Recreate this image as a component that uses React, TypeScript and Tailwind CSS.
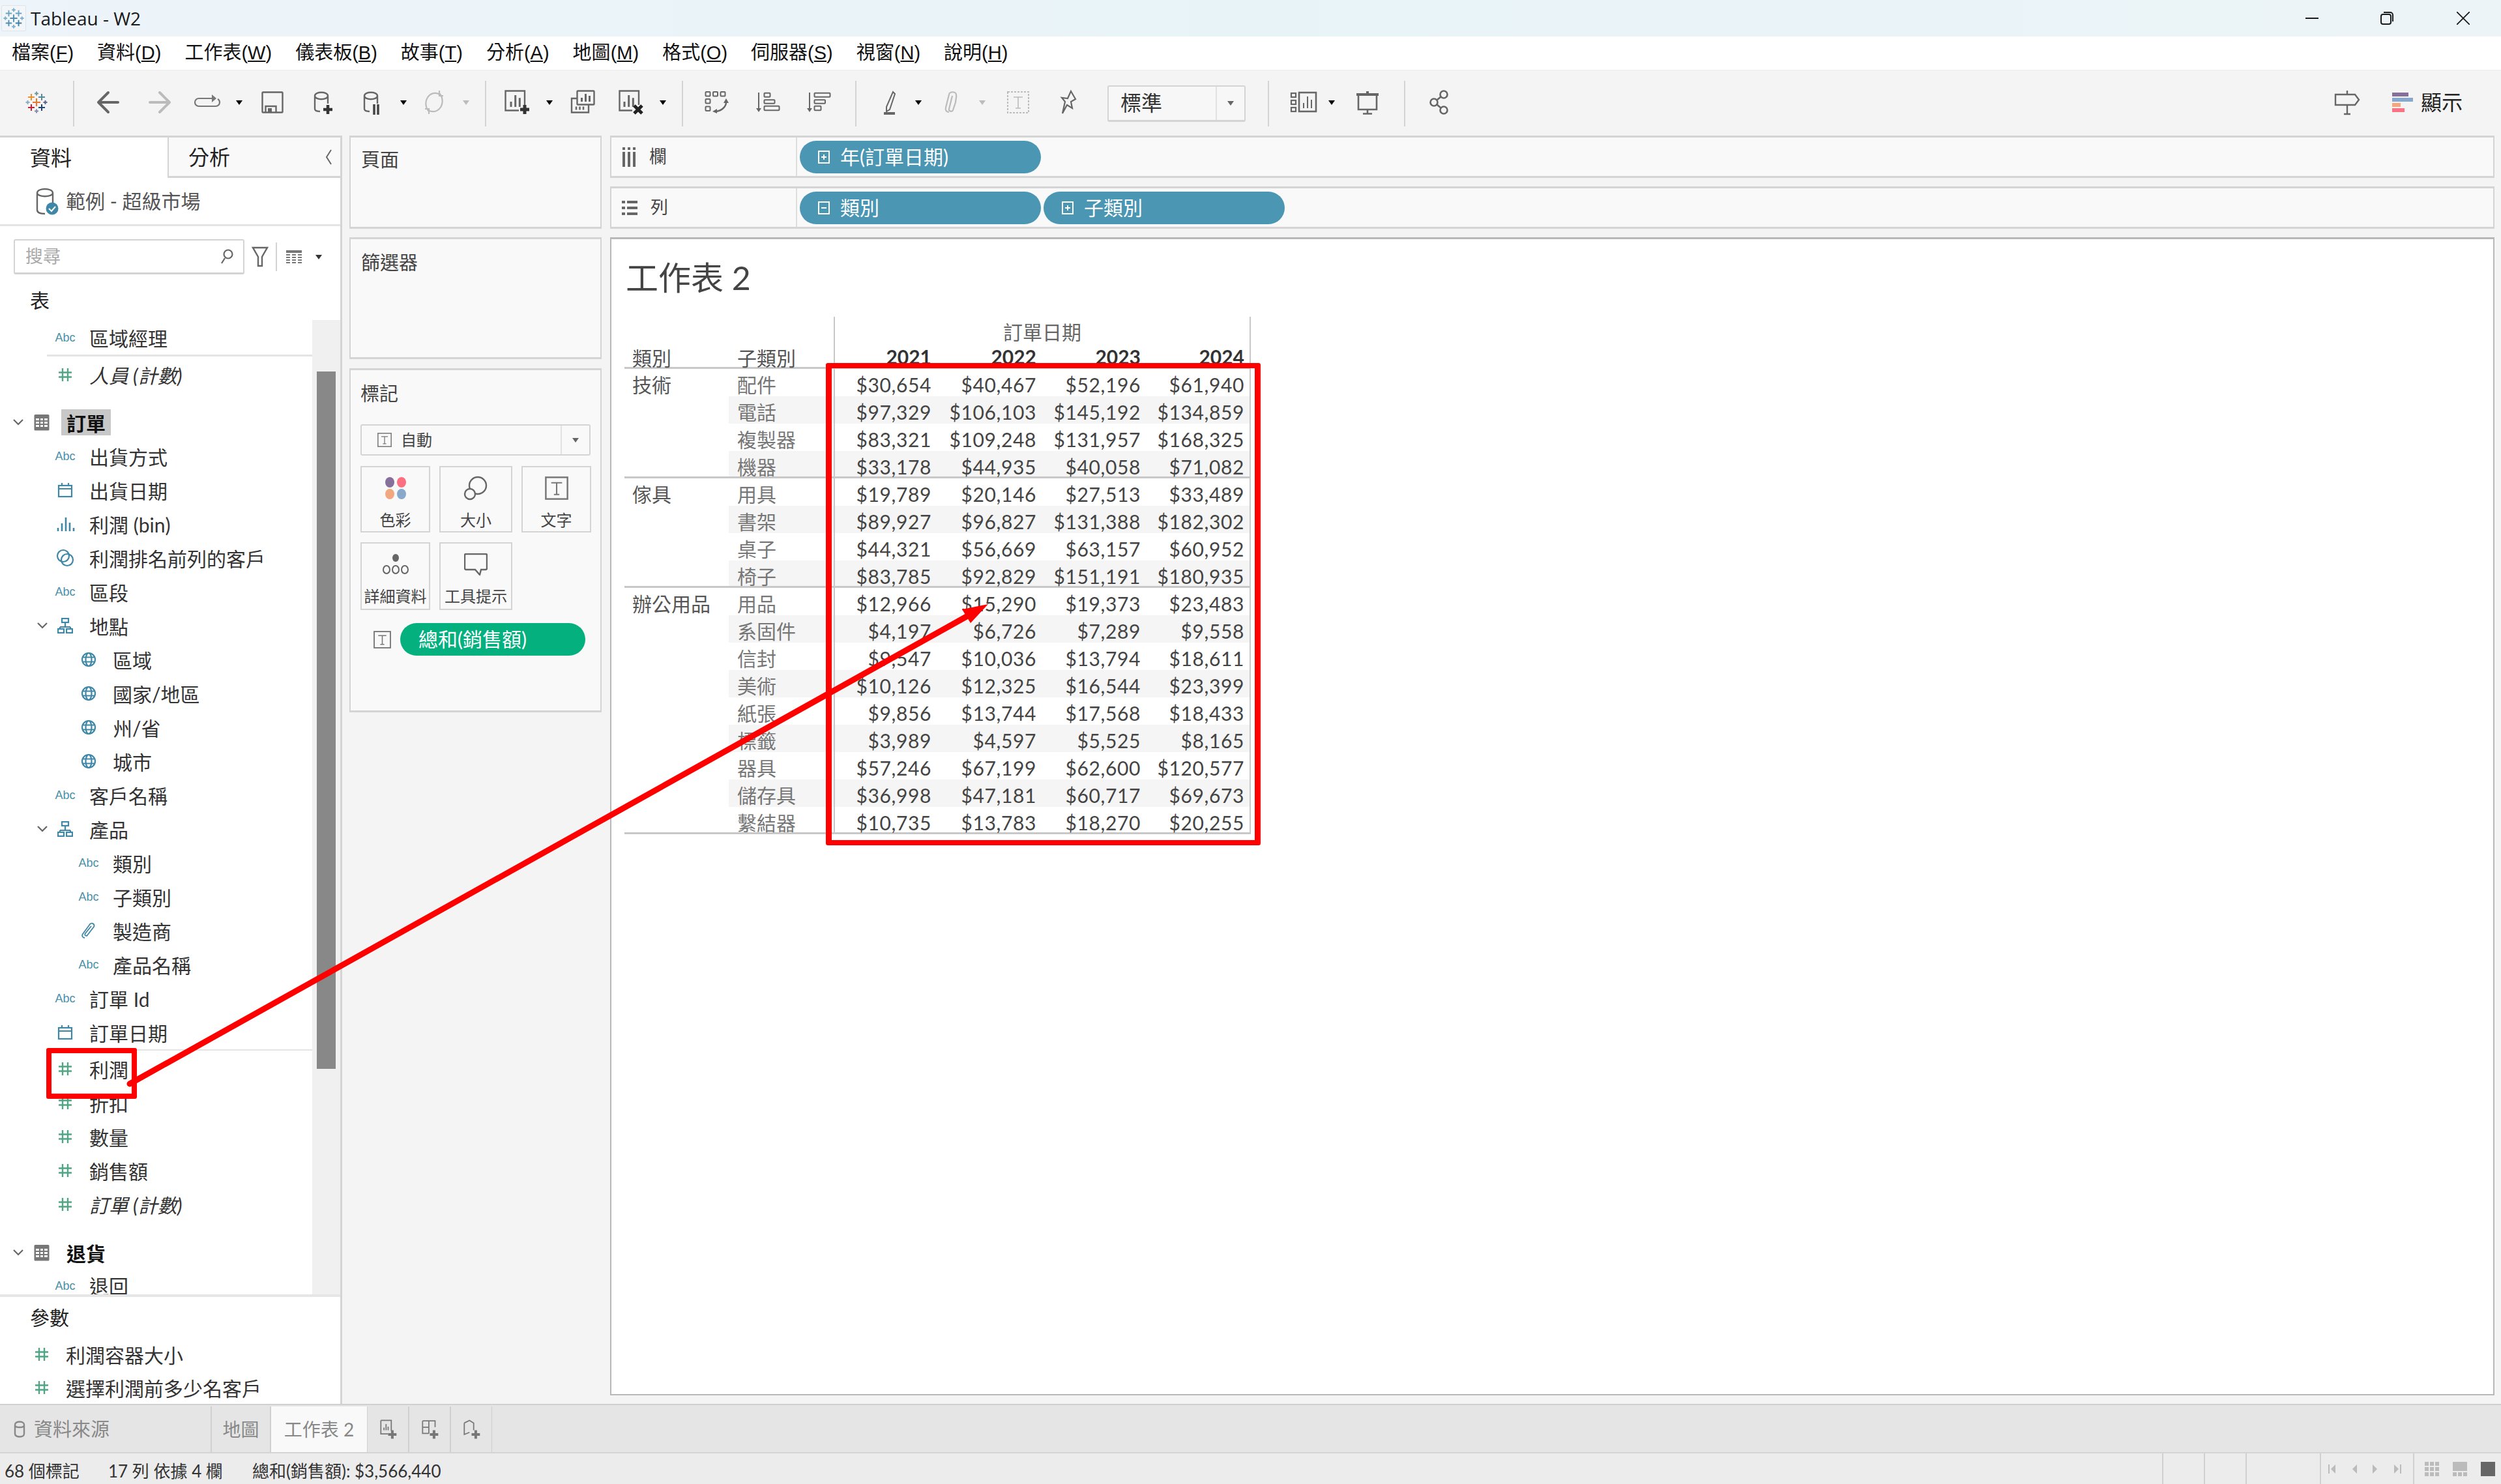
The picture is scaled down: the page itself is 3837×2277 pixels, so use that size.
import type { ReactNode } from "react"

type IconProps = { className?: string }

// base wrapper for the 44x44 toolbar drawings
function Ico({ children, className = "text-[#666]" }: { children: ReactNode; className?: string }) {
  return (
    <svg width={44} height={44} viewBox="0 0 44 44" fill="none" stroke="currentColor" strokeWidth={2.4} className={`shrink-0 ${className}`}>
      {children}
    </svg>
  )
}

function TableauLogo({ size = 36, muted = false }: { size?: number; muted?: boolean }) {
  const crosses: [number, number, number, string][] = [
    [22, 22, 6, muted ? "#4f8fb5" : "#e8762d"],
    [14, 14, 5, muted ? "#6aa3c4" : "#eb912b"],
    [30, 14, 5, muted ? "#6aa3c4" : "#59879b"],
    [14, 30, 5, muted ? "#4f8fb5" : "#c72035"],
    [30, 30, 5, muted ? "#3f7ea8" : "#1f447a"],
    [22, 8.500, 3, muted ? "#7fb0cc" : "#7099a6"],
    [22, 35.500, 3, muted ? "#7fb0cc" : "#7e8fb0"],
    [8.500, 22, 3, muted ? "#7fb0cc" : "#8ab0bd"],
    [35.500, 22, 3, muted ? "#7fb0cc" : "#5b6591"],
  ]
  return (
    <svg width={size} height={size} viewBox="4 4 36 36" strokeWidth={2} className="shrink-0">
      {crosses.map(([x, y, r, c], i) => (
        <g key={i} stroke={c}>
          <path d={`M${x - r} ${y}H${x + r}M${x} ${y - r}V${y + r}`} />
        </g>
      ))}
    </svg>
  )
}

function Caret({ className = "text-[#666]" }: IconProps) {
  return (
    <svg width={14} height={14} viewBox="0 0 14 14" className={`shrink-0 ${className}`} fill="currentColor">
      <path d="M2 4h10l-5 7z" />
    </svg>
  )
}

const Cyl = () => <path d="M12 12c0-7 20-7 20 0s-20 7-20 0zM12 12v20c0 3 4 4 8 4M32 12v12" />
const SheetBars = () => <path d="M14 29V21M20.700 29V11M27.300 29V15.300" strokeWidth={3} />

const tbIcons = {
  back: <path d="M37 22H8M22 7L7 22l15 15" strokeWidth={4} strokeLinecap="round" strokeLinejoin="round" />,
  swap: (
    <>
      <path d="M30 16H9a6 6 0 0 0 0 12h26a6 6 0 0 0 6-6c0-2-1-4-3-5" strokeWidth={2.2} />
      <path d="M29 10l7 6-7 6z" fill="currentColor" stroke="none" />
    </>
  ),
  save: (
    <>
      <rect x="6.500" y="6.500" width="31" height="31" rx="1" />
      <path d="M11.500 37V28h16v9" />
      <path d="M15 31h6v6h-6z" fill="currentColor" stroke="none" />
    </>
  ),
  newDs: (
    <>
      <Cyl />
      <path d="M32 26v14M25 33h14" strokeWidth={4.500} stroke="#333" />
    </>
  ),
  pauseDs: (
    <>
      <Cyl />
      <path d="M27 25v16M33 25v16" strokeWidth={3.500} stroke="#444" />
    </>
  ),
  refresh: <path d="M33 12A14 16 0 0 0 14 36M11 32A14 16 0 0 0 30 8M30 4v8h6M14 40v-8H8" strokeWidth={2.2} />,
  newSheet: (
    <>
      <path d="M35 26V4.500H5.500v30H26" />
      <SheetBars />
      <path d="M35 26v14M28 33h14" strokeWidth={5} stroke="#333" />
    </>
  ),
  dup: (
    <>
      <rect x="13.500" y="4.500" width="26" height="21" rx="1" />
      <path d="M20.500 21v-6M26.500 21V9M32.500 21v-9" strokeWidth={3} />
      <path d="M13 16H5v21.500h26V26" />
      <path d="M12 33.500v-5M17.500 33.500v-5M23 33.500v-5" strokeWidth={2.500} />
    </>
  ),
  clear: (
    <>
      <path d="M36 26V4.500H6.500v30H26" />
      <SheetBars />
      <path d="M29 27l12 12M41 27L29 39" strokeWidth={5} stroke="#222" />
    </>
  ),
  pivot: (
    <>
      <rect x="5.500" y="6" width="7" height="6.500" rx="1" strokeWidth={2} />
      <rect x="17" y="6" width="7" height="6.500" rx="1" strokeWidth={2} />
      <rect x="28.500" y="6" width="7" height="6.500" rx="1" strokeWidth={2} />
      <rect x="5.500" y="17" width="7" height="6.500" rx="1" strokeWidth={2} />
      <rect x="5.500" y="28.500" width="7" height="6.500" rx="1" strokeWidth={2} />
      <path d="M37 22c0 7-7 13-16 14" />
      <path d="M33 23l4-7 4 7zM23 32l-7 4 7 3z" fill="currentColor" stroke="none" />
    </>
  ),
  sortAsc: (
    <>
      <path d="M9 7v26" strokeWidth={2} />
      <path d="M5 31h8l-4 6z" fill="currentColor" stroke="none" />
      <rect x="17.500" y="7.700" width="9" height="6" rx="1" strokeWidth={2} />
      <rect x="17.500" y="18.300" width="16" height="5.400" rx="1" strokeWidth={2} />
      <rect x="17.500" y="27.700" width="23" height="6.600" rx="1" strokeWidth={2} />
    </>
  ),
  sortDesc: (
    <>
      <path d="M8 7v26" strokeWidth={2} />
      <path d="M4 31h8l-4 6z" fill="currentColor" stroke="none" />
      <rect x="15.500" y="7.700" width="24" height="6" rx="1" strokeWidth={2} />
      <rect x="15.500" y="18.300" width="16.500" height="5.400" rx="1" strokeWidth={2} />
      <rect x="15.500" y="27.700" width="10" height="6.600" rx="1" strokeWidth={2} />
    </>
  ),
  pen: (
    <>
      <path d="M26 6l3 3-8 24-5 3v-7z" strokeWidth={2} />
      <path d="M12 39h17" strokeWidth={4} />
    </>
  ),
  clip: <path d="M17 37c-4 0-6-3-5-7l5-20c1-5 10-5 11 0 1 4-1 8-1 12l-4 12c-1 3-7 2-6-2l5-20" strokeWidth={2.200} />,
  textBox: (
    <>
      <rect x="6" y="6" width="32" height="32" strokeDasharray="3 2" strokeWidth={2} />
      <path d="M15 14h14M22 14v17M18 31h8" strokeWidth={1.600} />
    </>
  ),
  pin: <path d="M26 5l7 12-7 4 2 10-8-5-7 13 4-18-5-6 9 1z" strokeWidth={2.200} />,
  fit: (
    <>
      <rect x="3" y="8" width="7" height="6" strokeWidth={2.200} />
      <rect x="3" y="19" width="7" height="6" strokeWidth={2.200} />
      <rect x="3" y="30" width="7" height="6" strokeWidth={2.200} />
      <rect x="15" y="7" width="26" height="29" strokeWidth={2.600} />
      <path d="M22 31V23M28 31V13M34 31V18" strokeWidth={2} />
    </>
  ),
  present: (
    <>
      <path d="M5 10h34M22 5v5" strokeWidth={4} />
      <path d="M8 10v23h28V10M22 33v7M15 39.500h14" strokeWidth={2.600} />
    </>
  ),
  share: (
    <>
      <circle cx="29" cy="10" r="5.500" strokeWidth={2.600} />
      <circle cx="14" cy="22" r="5.500" strokeWidth={2.600} />
      <circle cx="29" cy="34" r="5.500" strokeWidth={2.600} />
      <path d="M24.500 13.500l-6 5M18.500 25.500l6 5" strokeWidth={2.600} />
    </>
  ),
  sign: <path d="M4 10h30l6 8-6 8H4zM22 4v6M22 26v14M17 40h10" />,
}

function Sep({ className }: IconProps) {
  return <div className={`mt-[4px] h-[70px] w-[2px] shrink-0 bg-[#d4d4d4] ${className}`} />
}

function Bar({ className }: IconProps) {
  return <div className={className} />
}

function Toolbar() {
  return (
    <div className="flex h-[101px] items-center border-t-[2px] border-[#f0f0f0] bg-[#f4f4f4] pb-[4px] pr-[59px]">
      <div className="ml-[34px] flex w-[44px] justify-center"><TableauLogo /></div>
      <Sep className="ml-[34px]" />
      <div className="ml-[30px]"><Ico>{tbIcons.back}</Ico></div>
      <div className="ml-[35px] -scale-x-100"><Ico className="text-[#bbb]">{tbIcons.back}</Ico></div>
      <div className="ml-[29px]"><Ico className="text-[#777]">{tbIcons.swap}</Ico></div>
      <Caret className="ml-[20px]" />
      <div className="ml-[22px]"><Ico>{tbIcons.save}</Ico></div>
      <div className="ml-[31px]"><Ico>{tbIcons.newDs}</Ico></div>
      <div className="ml-[32px]"><Ico>{tbIcons.pauseDs}</Ico></div>
      <Caret className="ml-[21px]" />
      <div className="ml-[18px]"><Ico className="text-[#bbb]">{tbIcons.refresh}</Ico></div>
      <Caret className="ml-[20px] text-[#bbb]" />
      <Sep className="ml-[22px]" />
      <div className="ml-[24px]"><Ico>{tbIcons.newSheet}</Ico></div>
      <Caret className="ml-[22px]" />
      <div className="ml-[22px]"><Ico>{tbIcons.dup}</Ico></div>
      <div className="ml-[28px]"><Ico>{tbIcons.clear}</Ico></div>
      <Caret className="ml-[22px]" />
      <Sep className="ml-[22px]" />
      <div className="ml-[29px]"><Ico>{tbIcons.pivot}</Ico></div>
      <div className="ml-[34px]"><Ico>{tbIcons.sortAsc}</Ico></div>
      <div className="ml-[35px]"><Ico>{tbIcons.sortDesc}</Ico></div>
      <Sep className="ml-[34px]" />
      <div className="ml-[30px]"><Ico>{tbIcons.pen}</Ico></div>
      <Caret className="ml-[14px]" />
      <div className="ml-[23px]"><Ico className="text-[#bbb]">{tbIcons.clip}</Ico></div>
      <Caret className="ml-[17px] text-[#bbb]" />
      <div className="ml-[26px]"><Ico className="text-[#bbb]">{tbIcons.textBox}</Ico></div>
      <div className="ml-[33px]"><Ico>{tbIcons.pin}</Ico></div>
      <div className="ml-[38px] mt-[4px] flex h-[56px] w-[212px] items-center rounded-[3px] border-2 border-b-[3px] border-[#d4d4d4] bg-[#f7f7f7]">
        <span className="flex-1 pl-[18px] text-[32px] leading-none text-[#333]">標準</span>
        <div className="flex h-full w-[44px] items-center justify-center border-l-2 border-[#e2e2e2]">
          <Caret />
        </div>
      </div>
      <Sep className="ml-[34px]" />
      <div className="ml-[31px]"><Ico>{tbIcons.fit}</Ico></div>
      <Caret className="ml-[14px]" />
      <div className="ml-[26px]"><Ico>{tbIcons.present}</Ico></div>
      <Sep className="ml-[34px]" />
      <div className="ml-[30px]"><Ico>{tbIcons.share}</Ico></div>
      <div className="ml-auto"><Ico>{tbIcons.sign}</Ico></div>
      <div className="ml-[47px] flex w-[32px] flex-col gap-[2px]">
        <Bar className="h-[6px] w-[25px] bg-[#86709a]" />
        <Bar className="h-[6px] w-[32px] bg-[#88a8cc]" />
        <Bar className="h-[6px] w-[13px] bg-[#f3a77f]" />
        <Bar className="h-[6px] w-[19px] bg-[#fb7285]" />
      </div>
      <span className="ml-[12px] text-[32px] leading-none text-[#222]">顯示</span>
    </div>
  )
}

const menus: [string, string][] = [
  ["檔案", "F"], ["資料", "D"], ["工作表", "W"], ["儀表板", "B"], ["故事", "T"], ["分析", "A"],
  ["地圖", "M"], ["格式", "O"], ["伺服器", "S"], ["視窗", "N"], ["說明", "H"],
]

function TitleBar() {
  return (
    <div className="flex h-[56px] items-center bg-gradient-to-r from-[#edf4fa] via-[#e8f3f8] to-[#ecf4f7]">
      <div className="ml-[2px] flex h-[40px] w-[38px] items-center justify-center rounded-[2px] border border-[#dde5ea] bg-[#f3f6f9]"><TableauLogo size={34} muted /></div>
      <span className="ml-[7px] [font-family:'Open_Sans',sans-serif] text-[28px] leading-none text-[#1a1a1a]">Tableau - W2</span>
      <div className="ml-auto flex items-center text-[#1a1a1a]">
        <svg width="20" height="20" viewBox="0 0 20 20" stroke="currentColor" strokeWidth="2"><path d="M0 10h20" /></svg>
        <svg className="ml-[95px]" width="20" height="20" viewBox="0 0 20 20" fill="none" stroke="currentColor" strokeWidth="2">
          <rect x="1" y="4" width="15" height="15" rx="3" />
          <path d="M5 1h10a4 4 0 0 1 4 4v10" />
        </svg>
        <svg className="ml-[97px] mr-[48px]" width="20" height="20" viewBox="0 0 20 20" stroke="currentColor" strokeWidth="1.8"><path d="M0 0l20 20M20 0L0 20" /></svg>
      </div>
    </div>
  )
}

function MenuBar() {
  return (
    <div className="flex h-[51px] items-center gap-[36px] bg-white pl-[18px] [font-family:'Liberation_Sans','Noto_Sans_CJK_TC',sans-serif] text-[29px] text-[#111]">
      {menus.map(([label, key]) => (
        <span key={key} className="leading-none">
          {label}(<u>{key}</u>)
        </span>
      ))}
    </div>
  )
}

/* ---- data pane field icons ---- */

const Abc = () => <span className="[font-family:'Liberation_Sans',sans-serif] text-[18px] text-[#4a8fa8]">Abc</span>
const Hash = () => (
  <svg width="22" height="22" viewBox="0 0 22 22" stroke="#4fa584" strokeWidth="2.4">
    <path d="M7 1v20M15 1v20M1 7.500h20M1 14.500h20" />
  </svg>
)
const Calendar = () => (
  <svg width="24" height="24" viewBox="0 0 24 24" fill="none" stroke="#3f87a6" strokeWidth="2.2">
    <rect x="2" y="5" width="20" height="17" />
    <path d="M2 10h20M7 1v5M17 1v5" />
  </svg>
)
const BinIco = () => (
  <svg width="30" height="24" viewBox="0 0 30 24" stroke="#3f87a6" strokeWidth="2.6">
    <path d="M4 23v-5M10 23V11M16 23V2M22 23V10M28 23v-5" />
  </svg>
)
const SetIco = () => (
  <svg width="28" height="28" viewBox="0 0 28 28" fill="none" stroke="#3f87a6" strokeWidth="2.2">
    <circle cx="11" cy="11" r="9" />
    <circle cx="17" cy="17" r="9" />
  </svg>
)
const HierIco = () => (
  <svg width="24" height="24" viewBox="0 0 24 24" fill="none" stroke="#3f87a6" strokeWidth="2.2">
    <rect x="7" y="1" width="10" height="6" />
    <path d="M12 7v7M4 14h16M4 14v3M20 14v3" />
    <rect x="1" y="17" width="9" height="6" />
    <rect x="14" y="17" width="9" height="6" />
  </svg>
)
const GlobeIco = () => (
  <svg width="24" height="24" viewBox="0 0 24 24" fill="none" stroke="#3f87a6" strokeWidth="2.2">
    <circle cx="12" cy="12" r="10" />
    <ellipse cx="12" cy="12" rx="4.500" ry="10" />
    <path d="M2 8.500h20M2 15.500h20" />
  </svg>
)
const ClipIco = () => (
  <svg width="24" height="26" viewBox="0 0 24 26" fill="none" stroke="#3f87a6" strokeWidth="1.8">
    <path d="M6 24c-3 0-5-3-3-6L14 3c3-3 8 0 6 4L10 20c-2 2-5 0-3-3L16 6" />
  </svg>
)
const TableIco = () => (
  <svg width="24" height="26" viewBox="0 0 24 26" fill="#777" stroke="none">
    <path d="M2 1h20a1.500 1.500 0 0 1 1.500 1.500V24a1.500 1.500 0 0 1-1.500 1.500H2A1.500 1.500 0 0 1 .5 24V2.500A1.500 1.500 0 0 1 2 1zM3 7v3h5V7zm7 0v3h4V7zm6 0v3h5V7zM3 12v3h5v-3zm7 0v3h4v-3zm6 0v3h5v-3zM3 17v3h5v-3zm7 0v3h4v-3zm6 0v3h5v-3z" fillRule="evenodd" />
  </svg>
)
const Chevron = () => (
  <svg width="22" height="14" viewBox="0 0 22 14" fill="none" stroke="#666" strokeWidth="2.2">
    <path d="M4 3l7 7 7-7" />
  </svg>
)

function IconSlot({ children }: { children: ReactNode }) {
  return <div className="flex w-[40px] shrink-0 items-center justify-center">{children}</div>
}

function Field({ icon, label, nested, italic }: { icon: ReactNode; label: string; nested?: boolean; italic?: boolean }) {
  return (
    <div className={`flex h-[52px] items-center ${nested ? "pl-[116px]" : "pl-[80px]"}`}>
      <IconSlot>{icon}</IconSlot>
      <span className={`ml-[17px] whitespace-nowrap pt-[3px] ${italic ? "italic" : ""}`}>{label}</span>
    </div>
  )
}

function Folder({ icon, label }: { icon: ReactNode; label: string }) {
  return (
    <div className="flex h-[52px] items-center pl-[54px]">
      <Chevron />
      <div className="ml-[4px]"><IconSlot>{icon}</IconSlot></div>
      <span className="ml-[17px] whitespace-nowrap pt-[3px]">{label}</span>
    </div>
  )
}

function TableHead({ label, active }: { label: string; active?: boolean }) {
  return (
    <div className="flex h-[52px] items-center pl-[17px]">
      <Chevron />
      <div className="ml-[5px]"><IconSlot><TableIco /></IconSlot></div>
      <span className={`ml-[10px] flex h-[40px] items-center px-[8px] pt-[2px] font-bold text-[#111] ${active ? "bg-[#c8c8c8]" : ""}`}>{label}</span>
    </div>
  )
}

function DataPane() {
  return (
    <div className="flex w-[525px] shrink-0 flex-col border-r-[3px] border-[#d4d4d4] bg-white text-[30px] text-[#333]">
      {/* tabs */}
      <div className="flex h-[65px] shrink-0 border-t-[3px] border-[#d4d4d4]">
        <div className="flex w-[257px] items-center pl-[46px] text-[32px] text-[#222]">資料</div>
        <div className="flex flex-1 items-center justify-between border-b-[3px] border-l-2 border-[#d4d4d4] bg-[#f9f9f9] pl-[30px] pr-[12px] text-[32px] text-[#222]">
          分析
          <svg width="12" height="26" viewBox="0 0 12 26" fill="none" stroke="#666" strokeWidth="2"><path d="M10 2L3 13l7 11" /></svg>
        </div>
      </div>
      {/* source */}
      <div className="flex h-[74px] shrink-0 items-center border-b-[3px] border-[#e4e4e4] pl-[54px]">
        <svg width="36" height="42" viewBox="0 0 36 42" fill="none" stroke="#666" strokeWidth="2.4" className="shrink-0">
          <path d="M3 8c0-8 24-8 24 0v16M3 8c0 7 24 7 24 0M3 8v26c0 4 5 6 12 6" />
          <circle cx="26" cy="32" r="9.500" fill="#3f87a6" stroke="none" />
          <path d="M21 32l4 4 6-7" stroke="#fff" strokeWidth="2" />
        </svg>
        <span className="ml-[11px] text-[30px] text-[#555]">範例 - 超級市場</span>
      </div>
      {/* search */}
      <div className="flex h-[82px] shrink-0 items-center pl-[21px] pt-[12px]">
        <div className="flex h-[54px] w-[354px] items-center justify-between rounded-[3px] border-2 border-b-[3px] border-[#d4d4d4] pl-[16px] pr-[14px] text-[27px] text-[#aaa]">
          搜尋
          <svg width="22" height="26" viewBox="0 0 22 26" fill="none" stroke="#666" strokeWidth="2.2"><circle cx="13" cy="9" r="6.500" /><path d="M8 15l-5 8" /></svg>
        </div>
        <svg className="ml-[11px]" width="26" height="34" viewBox="0 0 26 34" fill="none" stroke="#666" strokeWidth="2.4"><path d="M2 3h22l-8 14v14h-6V17z" /></svg>
        <div className="ml-[11px] h-[44px] w-[2px] bg-[#d4d4d4]" />
        <svg className="ml-[14px]" width="24" height="20" viewBox="0 0 24 20" fill="#777"><path d="M0 0h24v4H0zM0 6h6v2H0zM9 6h6v2H9zM18 6h6v2h-6zM0 10h6v2H0zM9 10h6v2H9zM18 10h6v2h-6zM0 14h6v2H0zM9 14h6v2H9zM18 14h6v2h-6zM0 18h6v2H0zM9 18h6v2H9zM18 18h6v2h-6z" /></svg>
        <Caret className="ml-[19px]" />
      </div>
      {/* tables header */}
      <div className="flex h-[62px] shrink-0 items-center pl-[46px] text-[30px] text-[#222]">表</div>
      {/* list */}
      <div className="flex h-[1495px] shrink-0">
        <div className="w-[479px] shrink-0 pt-[1px]">
          <Field icon={<Abc />} label="區域經理" />
          <div className="ml-[72px] h-[5px] border-t-[3px] border-[#e4e4e4]" />
          <Field icon={<Hash />} label="人員 (計數)" italic />
          <div className="h-[21px]" />
          <TableHead label="訂單" active />
          <Field icon={<Abc />} label="出貨方式" />
          <Field icon={<Calendar />} label="出貨日期" />
          <Field icon={<BinIco />} label="利潤 (bin)" />
          <Field icon={<SetIco />} label="利潤排名前列的客戶" />
          <Field icon={<Abc />} label="區段" />
          <Folder icon={<HierIco />} label="地點" />
          <Field icon={<GlobeIco />} label="區域" nested />
          <Field icon={<GlobeIco />} label="國家/地區" nested />
          <Field icon={<GlobeIco />} label="州/省" nested />
          <Field icon={<GlobeIco />} label="城市" nested />
          <Field icon={<Abc />} label="客戶名稱" />
          <Folder icon={<HierIco />} label="產品" />
          <Field icon={<Abc />} label="類別" nested />
          <Field icon={<Abc />} label="子類別" nested />
          <Field icon={<ClipIco />} label="製造商" nested />
          <Field icon={<Abc />} label="產品名稱" nested />
          <Field icon={<Abc />} label="訂單 Id" />
          <Field icon={<Calendar />} label="訂單日期" />
          <div className="ml-[72px] h-[4px] border-t-[2px] border-[#e4e4e4]" />
          <Field icon={<Hash />} label="利潤" />
          <Field icon={<Hash />} label="折扣" />
          <Field icon={<Hash />} label="數量" />
          <Field icon={<Hash />} label="銷售額" />
          <Field icon={<Hash />} label="訂單 (計數)" italic />
          <div className="h-[22px]" />
          <TableHead label="退貨" />
          {/* last row sits right on the list's bottom edge */}
          <div className="flex h-[37px] items-end pl-[80px] leading-[24px]">
            <IconSlot><Abc /></IconSlot>
            <span className="ml-[17px] whitespace-nowrap">退回</span>
          </div>
        </div>
        <div className="flex-1 bg-[#f0f0f0] pl-[7px] pt-[79px]">
          <div className="h-[1070px] w-[29px] bg-[#888]" />
        </div>
      </div>
      {/* parameters */}
      <div className="flex-1 border-t-[4px] border-[#e6e6e6]">
        <div className="flex h-[62px] items-center pl-[46px] text-[30px] text-[#222]">參數</div>
        {["利潤容器大小", "選擇利潤前多少名客戶"].map((p) => (
          <div key={p} className="flex h-[51px] items-center pl-[44px]">
            <IconSlot><Hash /></IconSlot>
            <span className="ml-[17px] pt-[4px]">{p}</span>
          </div>
        ))}
      </div>
    </div>
  )
}

/* ---- middle column ---- */

const cardClass = "shrink-0 border-x-2 border-y-[3px] border-[#d4d4d4] bg-[#f9f9f9]"

const MiniT = ({ size = 26 }: { size?: number }) => (
  <svg width={size} height={size} viewBox="0 0 26 26" fill="none" stroke="#777" strokeWidth="1.8" className="shrink-0">
    <rect x="1" y="1" width="24" height="24" />
    <path d="M7 7h12M13 7v13M10 20h6" strokeWidth="1.500" />
  </svg>
)

const markIcons: Record<string, ReactNode> = {
  color: (
    <svg width="34" height="36" viewBox="0 0 34 36">
      <ellipse cx="8" cy="9" rx="7" ry="8" fill="#86709a" />
      <ellipse cx="26" cy="9" rx="7" ry="8" fill="#fb6f82" />
      <ellipse cx="8" cy="27" rx="7" ry="8" fill="#f3a77f" />
      <ellipse cx="26" cy="27" rx="7" ry="8" fill="#88a8cc" />
    </svg>
  ),
  size: (
    <svg width="38" height="38" viewBox="0 0 38 38" fill="none" stroke="#666" strokeWidth="2.4">
      <circle cx="22" cy="15" r="13" />
      <circle cx="10" cy="28" r="8" fill="#f9f9f9" />
    </svg>
  ),
  text: <MiniT size={36} />,
  detail: (
    <svg width="42" height="34" viewBox="0 0 42 34" fill="none" stroke="#666" strokeWidth="2">
      <ellipse cx="21" cy="7" rx="5" ry="6" fill="#666" stroke="none" />
      <ellipse cx="7" cy="25" rx="5" ry="6" />
      <ellipse cx="21" cy="25" rx="5" ry="6" />
      <ellipse cx="35" cy="25" rx="5" ry="6" />
    </svg>
  ),
  tip: (
    <svg width="36" height="34" viewBox="0 0 36 34" fill="none" stroke="#666" strokeWidth="2.4">
      <path d="M3 1h30a2 2 0 0 1 2 2v20a2 2 0 0 1-2 2h-7l-2 8-7-8H3a2 2 0 0 1-2-2V3a2 2 0 0 1 2-2z" />
    </svg>
  ),
}

function MarkBtn({ icon, label }: { icon: ReactNode; label: string }) {
  return (
    <div className="flex flex-col items-center border-2 border-[#d4d4d4] pt-[10px] text-[24px] text-[#444]">
      <div className="flex h-[44px] items-center justify-center">{icon}</div>
      <span className="mt-[12px] whitespace-nowrap leading-[30px]">{label}</span>
    </div>
  )
}

function MiddleColumn() {
  return (
    <div className="ml-[11px] flex w-[387px] shrink-0 flex-col text-[#444]">
      <div className={`${cardClass} h-[143px] pl-[16px] pt-[16px] text-[29px] leading-[36px]`}>頁面</div>
      <div className={`${cardClass} mt-[13px] h-[187px] pl-[16px] pt-[18px] text-[29px] leading-[36px]`}>篩選器</div>
      <div className={`${cardClass} mt-[14px] h-[528px] px-[15px]`}>
        <div className="flex h-[83px] items-center pb-[12px] text-[29px]">標記</div>
        <div className="flex h-[48px] items-center rounded-[3px] border-2 border-[#d4d4d4]">
          <div className="ml-[24px]"><MiniT size={22} /></div>
          <span className="ml-[14px] flex-1 text-[24px]">自動</span>
          <div className="flex h-full w-[44px] items-center justify-center border-l-2 border-[#e2e2e2]"><Caret /></div>
        </div>
        <div className="mt-[16px] grid grid-cols-[107px_112px_107px] grid-rows-[102px_104px] gap-x-[14px] gap-y-[15px]">
          <MarkBtn icon={markIcons.color} label="色彩" />
          <MarkBtn icon={markIcons.size} label="大小" />
          <MarkBtn icon={markIcons.text} label="文字" />
          <MarkBtn icon={markIcons.detail} label="詳細資料" />
          <MarkBtn icon={markIcons.tip} label="工具提示" />
        </div>
        <div className="mt-[20px] flex items-center pl-[20px]">
          <MiniT size={27} />
          <div className="ml-[14px] flex h-[50px] w-[284px] items-center rounded-full bg-[#05b07f] pb-[2px] pl-[28px] text-[30px] text-white">總和(銷售額)</div>
        </div>
      </div>
    </div>
  )
}

/* ---- shelves ---- */

function Pill({ label, open }: { label: string; open?: boolean }) {
  return (
    <div className="flex h-[50px] w-[370px] shrink-0 items-center rounded-full bg-[#4a96b3] pl-[28px] text-[30px] text-white">
      <svg width="18" height="22" viewBox="0 0 18 22" fill="none" stroke="#fff" strokeWidth="2" className="shrink-0">
        <rect x="1" y="2" width="16" height="18" />
        <path d={open ? "M5 11h8" : "M5 11h8M9 7v8"} />
      </svg>
      <span className="ml-[16px] pb-[2px] leading-none">{label}</span>
    </div>
  )
}

function Shelf({ icon, label, children, className }: { icon: ReactNode; label: string; children: ReactNode; className?: string }) {
  return (
    <div className={`flex h-[65px] shrink-0 border-x-2 border-y-[3px] border-[#d4d4d4] bg-[#f9f9f9] ${className ?? ""}`}>
      <div className="flex w-[285px] shrink-0 items-center border-r-2 border-[#dedede] pl-[16px] text-[27px] text-[#444]">
        {icon}
        <span className="ml-[20px]">{label}</span>
      </div>
      <div className="flex items-center gap-[4px] pl-[4px]">{children}</div>
    </div>
  )
}

/* ---- text table ---- */

type Row = [string, string, string, string, string]
const groups: { name: string; rows: Row[] }[] = [
  {
    name: "技術",
    rows: [
      ["配件", "$30,654", "$40,467", "$52,196", "$61,940"],
      ["電話", "$97,329", "$106,103", "$145,192", "$134,859"],
      ["複製器", "$83,321", "$109,248", "$131,957", "$168,325"],
      ["機器", "$33,178", "$44,935", "$40,058", "$71,082"],
    ],
  },
  {
    name: "傢具",
    rows: [
      ["用具", "$19,789", "$20,146", "$27,513", "$33,489"],
      ["書架", "$89,927", "$96,827", "$131,388", "$182,302"],
      ["桌子", "$44,321", "$56,669", "$63,157", "$60,952"],
      ["椅子", "$83,785", "$92,829", "$151,191", "$180,935"],
    ],
  },
  {
    name: "辦公用品",
    rows: [
      ["用品", "$12,966", "$15,290", "$19,373", "$23,483"],
      ["系固件", "$4,197", "$6,726", "$7,289", "$9,558"],
      ["信封", "$9,547", "$10,036", "$13,794", "$18,611"],
      ["美術", "$10,126", "$12,325", "$16,544", "$23,399"],
      ["紙張", "$9,856", "$13,744", "$17,568", "$18,433"],
      ["標籤", "$3,989", "$4,597", "$5,525", "$8,165"],
      ["器具", "$57,246", "$67,199", "$62,600", "$120,577"],
      ["儲存具", "$36,998", "$47,181", "$60,717", "$69,673"],
      ["繫結器", "$10,735", "$13,783", "$18,270", "$20,255"],
    ],
  },
]

function TextTable() {
  return (
    <div className="ml-[20px] w-[961px] text-[30px]">
      <div className="flex h-[80px] border-b-[3px] border-[#c8c8c8]">
        <div className="flex w-[321px] items-end text-[#555]">
          <span className="w-[160px] pl-[12px] leading-[28px]">類別</span>
          <span className="pl-[13px] leading-[28px]">子類別</span>
        </div>
        <div className="flex w-[640px] flex-col border-x-2 border-[#c8c8c8]">
          <div className="h-[44px] text-center leading-[46px] text-[#666]">訂單日期</div>
          <div className="grid grid-cols-[156px_161px_160px_159px] font-bold leading-[34px] text-[#333]">
            {["2021", "2022", "2023", "2024"].map((y) => (
              <span key={y} className="pr-[8px] text-right">{y}</span>
            ))}
          </div>
        </div>
      </div>
      {groups.map((g) => (
        <div key={g.name} className="flex border-b-[3px] border-[#c8c8c8]">
          <div className="w-[160px] shrink-0 pl-[12px] pt-[3px] leading-[42px] text-[#555]">{g.name}</div>
          <div className="flex-1">
            {g.rows.map((r, i) => (
              <div
                key={r[0]}
                className={`flex leading-[42px] ${i === g.rows.length - 1 ? "h-[39px]" : "h-[42px]"} ${i % 2 === 1 ? "bg-[#f5f5f5]" : ""}`}
              >
                <span className="w-[161px] shrink-0 pl-[13px] pt-[3px] text-[#777]">{r[0]}</span>
                <div className="grid flex-1 grid-cols-[156px_161px_160px_159px] border-x-2 border-[#c8c8c8] tracking-[0.6px] text-[#444]">
                  {r.slice(1).map((v, j) => (
                    <span key={j} className="pr-[8px] pt-[3px] text-right">{v}</span>
                  ))}
                </div>
              </div>
            ))}
          </div>
        </div>
      ))}
    </div>
  )
}

function SheetArea() {
  return (
    <div className="ml-[13px] mr-[10px] flex min-w-0 flex-1 flex-col">
      <Shelf
        label="欄"
        icon={
          <svg width="22" height="30" viewBox="0 0 22 30" fill="#666" className="shrink-0">
            <path d="M1 0h4v4H1zM9 0h4v4H9zM17 0h4v4h-4zM1 7h4v23H1zM9 7h4v23H9zM17 7h4v23h-4z" />
          </svg>
        }
      >
        <Pill label="年(訂單日期)" />
      </Shelf>
      <Shelf
        className="mt-[13px]"
        label="列"
        icon={
          <svg width="24" height="24" viewBox="0 0 24 24" fill="#666" className="shrink-0">
            <path d="M0 1h5v4H0zM8 1h16v4H8zM0 10h5v4H0zM8 10h16v4H8zM0 19h5v4H0zM8 19h16v4H8z" />
          </svg>
        }
      >
        <Pill label="類別" open />
        <Pill label="子類別" />
      </Shelf>
      <div className="mt-[13px] h-[1777px] border-2 border-t-[3px] border-[#b8b8b8] bg-white">
        <div className="flex h-[119px] items-start pl-[22px] pt-[29px] text-[50px] leading-[60px] text-[#444]">工作表 2</div>
        <TextTable />
      </div>
    </div>
  )
}

/* ---- bottom bars ---- */

function TabBar() {
  return (
    <div className="flex h-[74px] shrink-0 border-t-[2px] border-[#d0d0d0] bg-[#e5e5e5] pt-[2px] text-[28px] text-[#888]">
      <div className="flex w-[325px] items-center border-r-2 border-[#d0d0d0] pl-[21px]">
        <svg width="18" height="26" viewBox="0 0 18 26" fill="none" stroke="#888" strokeWidth="2.4"><path d="M2 6c0-6 14-6 14 0v14c0 6-14 6-14 0zM2 7c0 4 14 4 14 0" /></svg>
        <span className="ml-[13px] text-[29px]">資料來源</span>
      </div>
      <div className="flex w-[91px] items-center justify-center border-r-2 border-[#d0d0d0]">地圖</div>
      <div className="flex w-[147px] items-center justify-center bg-[#f9f9f9]">工作表 2</div>
      {[
        "M4 3h20v20M4 3v26h14M10 22v-5M14 22V10M18 22v-7",
        "M4 4h24v12M4 4v24h12M4 16h12M16 4v24",
        "M4 8l10-5 8 5v14M4 8v22l10-4",
      ].map((d, i) => (
        <div key={i} className="flex w-[64px] items-center justify-center border-x border-[#d0d0d0]">
          <svg width="29" height="32" viewBox="0 0 36 40" fill="none" stroke="#777" strokeWidth="2.2">
            <path d={d} />
            <path d="M26 22v16M18 30h16" strokeWidth="5" />
          </svg>
        </div>
      ))}
    </div>
  )
}

function StatusBar() {
  const cell = "h-full border-l-2 border-[#d0d0d0]"
  return (
    <div className="flex h-[49px] shrink-0 items-center border-t-[2px] border-[#d4d4d4] bg-[#ececec] text-[26px] text-[#333]">
      <span className="ml-[7px] w-[159px] pt-[7px]">68 個標記</span>
      <span className="w-[221px] pt-[7px]">17 列 依據 4 欄</span>
      <span className="pt-[7px]">總和(銷售額): $3,566,440</span>
      <div className={`${cell} ml-auto w-[64px]`} />
      <div className={`${cell} w-[64px]`} />
      <div className={`${cell} w-[114px]`} />
      <div className={`${cell} flex w-[143px] items-center justify-center gap-[16px]`}>
        <svg width="120" height="16" viewBox="0 0 120 16" fill="#bbb">
          <path d="M0 1h2v14H0zM11 1v14L4 8zM44 1v14l-7-7zM68 1v14l7-7zM101 1v14l7-7zM110 1h2v14h-2z" />
        </svg>
      </div>
      <div className={`${cell} flex w-[135px] items-center gap-[21px] pl-[16px]`}>
        <svg width="22" height="22" viewBox="0 0 22 22" fill="#bbb">
          <path d="M0 0h6v6H0zM8 0h6v6H8zM16 0h6v6h-6zM0 8h6v6H0zM8 8h6v6H8zM16 8h6v6h-6zM0 16h6v6H0zM8 16h6v6H8zM16 16h6v6h-6z" />
        </svg>
        <svg width="22" height="22" viewBox="0 0 22 22" fill="#bbb">
          <path d="M0 0h22v14H0zM0 16h6v6H0zM8 16h6v6H8zM16 16h6v6h-6z" />
        </svg>
        <div className="h-[22px] w-[22px] bg-[#666]" />
      </div>
    </div>
  )
}

// red callouts drawn over the screenshot
function Annotations() {
  return (
    <>
      <div className="absolute left-[71px] top-[1608px] h-[78px] w-[139px] rounded-[3px] border-[8px] border-[#ff0000]" />
      <div className="absolute left-[1267px] top-[557px] h-[740px] w-[667px] rounded-[3px] border-[8px] border-x-[9px] border-[#ff0000]" />
      <svg className="pointer-events-none absolute inset-0" width="3837" height="2277" viewBox="0 0 3837 2277">
        <path d="M199 1663L1490 942" stroke="#ff0000" strokeWidth="9" strokeLinecap="round" />
        <path d="M1516 927L1476 935 1489 956z" fill="#ff0000" />
      </svg>
    </>
  )
}

export default function App() {
  return (
    <div className="relative flex h-[2277px] w-[3837px] flex-col overflow-hidden bg-[#f4f4f4] [font-family:Lato,'Noto_Sans_CJK_TC',sans-serif]">
      <TitleBar />
      <MenuBar />
      <Toolbar />
      <div className="flex h-[1946px] shrink-0">
        <DataPane />
        <MiddleColumn />
        <SheetArea />
      </div>
      <TabBar />
      <StatusBar />
      <Annotations />
    </div>
  )
}
